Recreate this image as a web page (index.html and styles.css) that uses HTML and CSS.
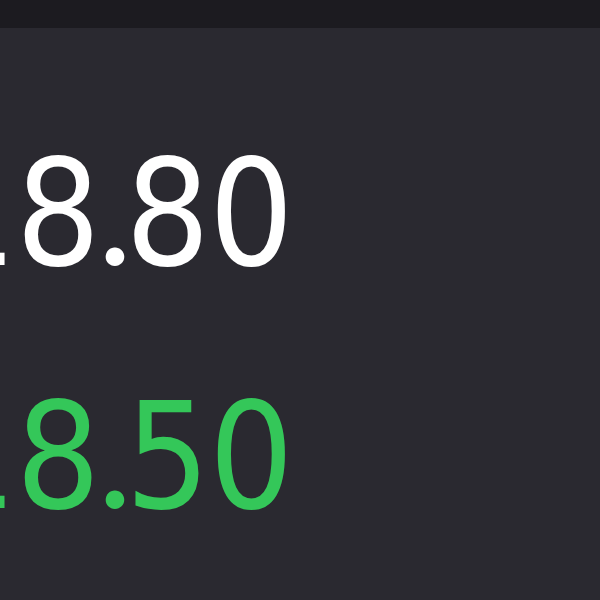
FILE: index.html
```html
<!DOCTYPE html>
<html lang="en">
<head>
  <meta charset="UTF-8" />
  <meta name="viewport" content="width=device-width, initial-scale=1.0"/>
  <title>Quote</title>
  <link rel="stylesheet" href="styles.css">
</head>
<body>
  <div class="topbar"></div>

  <!-- PRICES -->
  <div class="quote">
    <div class="price">18<span class="dot">.</span>80</div>
    <div class="price price-up">18<span class="dot">.</span>50</div>
  </div>
</body>
</html>
```

FILE: styles.css
```css
html, body {
  font-family: 'DejaVu Sans Condensed', 'DejaVu Sans', sans-serif;
  background: #2a2930;
  margin: 0;
  padding: 0;
  height: 100vh;
  overflow: hidden;
}
.topbar {
  height: 28px;
  background: #1c1b20;
}
/* -- PRICES -- */
.quote {
  padding-top: 65px;
  margin-left: -68px;
}
.price {
  font-size: 148px;
  line-height: 243px;
  letter-spacing: -1px;
  color: #ffffff;
  white-space: nowrap;
}
.price-up {
  color: #34c759;
}
.dot {
  font-family: Lato, sans-serif;
  line-height: 0;
  margin: 0 -6px 0 -2px;
}
```
